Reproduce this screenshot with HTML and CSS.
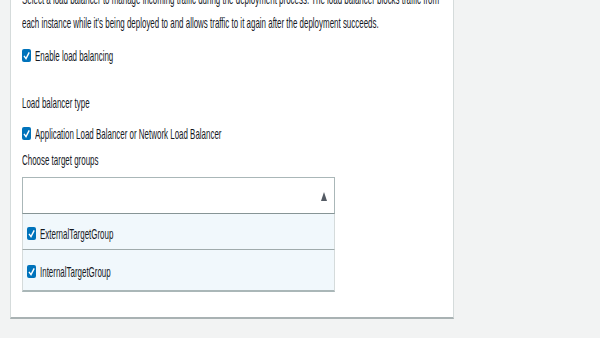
FILE: index.html
```html
<!DOCTYPE html>
<html lang="en">
<head>
  <meta charset="UTF-8">
  <meta name="viewport" content="width=device-width, initial-scale=1.0">
  <title>Load balancer</title>
  <link rel="stylesheet" href="styles.css">
</head>
<body>

  <div class="panel">
    <p class="desc"><span class="sq">Select a load balancer to manage incoming traffic during the deployment process. The load balancer blocks traffic from<br>each instance while it's being deployed to and allows traffic to it again after the deployment succeeds.</span></p>

    <label class="check-row row-enable">
      <span class="box"><svg viewBox="0 0 9 13" width="9" height="13"><path d="M2 6.8 L4 9.6 L7.2 3.4" fill="none" stroke="#fff" stroke-width="1.4"/></svg></span>
      <span class="sq">Enable load balancing</span>
    </label>

    <div class="field-label row-type"><span class="sq">Load balancer type</span></div>

    <label class="check-row row-app">
      <span class="box"><svg viewBox="0 0 9 13" width="9" height="13"><path d="M2 6.8 L4 9.6 L7.2 3.4" fill="none" stroke="#fff" stroke-width="1.4"/></svg></span>
      <span class="sq">Application Load Balancer or Network Load Balancer</span>
    </label>

    <div class="field-label row-choose"><span class="sq">Choose target groups</span></div>

    <div class="multiselect">
      <div class="trigger">
        <svg class="caret" viewBox="0 0 6 9" width="6" height="9"><polygon points="3,0 6,9 0,9" fill="#545b64"/></svg>
      </div>
      <div class="option opt-first">
        <span class="box"><svg viewBox="0 0 9 13" width="9" height="13"><path d="M2 6.8 L4 9.6 L7.2 3.4" fill="none" stroke="#fff" stroke-width="1.4"/></svg></span>
        <span class="sq">ExternalTargetGroup</span>
      </div>
      <div class="option opt-last">
        <span class="box"><svg viewBox="0 0 9 13" width="9" height="13"><path d="M2 6.8 L4 9.6 L7.2 3.4" fill="none" stroke="#fff" stroke-width="1.4"/></svg></span>
        <span class="sq">InternalTargetGroup</span>
      </div>
    </div>
  </div>

</body>
</html>
```

FILE: styles.css
```css
/* Painel de load balancer */
body {
  margin: 0;
  padding: 0;
  background-color: #f2f3f3;
  font-family: "Liberation Sans", Arial, sans-serif;
  font-size: 15px;
  color: #16191f;
  overflow: hidden;
}
.panel {
  width: 420px;
  margin: -13px 0 0 10px;
  padding: 0 11px 25px 11px;
  background-color: #fff;
  border: 1px solid #d5dbdb;
  border-top: none;
  border-bottom: 2px solid #a9b2b3;
}
.sq {
  display: inline-block;
  white-space: nowrap;
  transform: scaleX(0.53);
  transform-origin: 0 50%;
}
.desc {
  margin: 0;
  line-height: 24px;
  overflow: hidden;
}
.check-row {
  display: flex;
  align-items: center;
  height: 24px;
  overflow: hidden;
}
.field-label {
  height: 24px;
  line-height: 24px;
  overflow: hidden;
}
.box {
  display: flex;
  width: 9px;
  height: 13px;
  margin-right: 4px;
  background-color: #0073bb;
  border-radius: 2px;
  flex-shrink: 0;
}
.row-enable { margin-top: 8px; }
.row-type { margin-top: 24px; }
.row-app { margin-top: 6px; }
.row-choose { margin-top: 3px; }
.multiselect {
  width: 313px;
  margin-top: 5px;
}
.trigger {
  height: 35px;
  display: flex;
  align-items: center;
  justify-content: flex-end;
  padding-right: 7px;
  background-color: #fff;
  border: 1px solid #aab7b8;
  border-bottom-color: #879596;
}
.caret {
  margin-top: 2px;
}
.option {
  display: flex;
  align-items: center;
  padding-left: 4px;
  padding-top: 4px;
  background-color: #f1f8fc;
  border: 1px solid #d5dbdb;
  border-top: none;
  border-bottom: 1px solid #a0abac;
  overflow: hidden;
}
.opt-first { height: 31px; }
.opt-last {
  height: 34px;
  padding-bottom: 2px;
  border-bottom: 2px solid #aab7b8;
}
```
